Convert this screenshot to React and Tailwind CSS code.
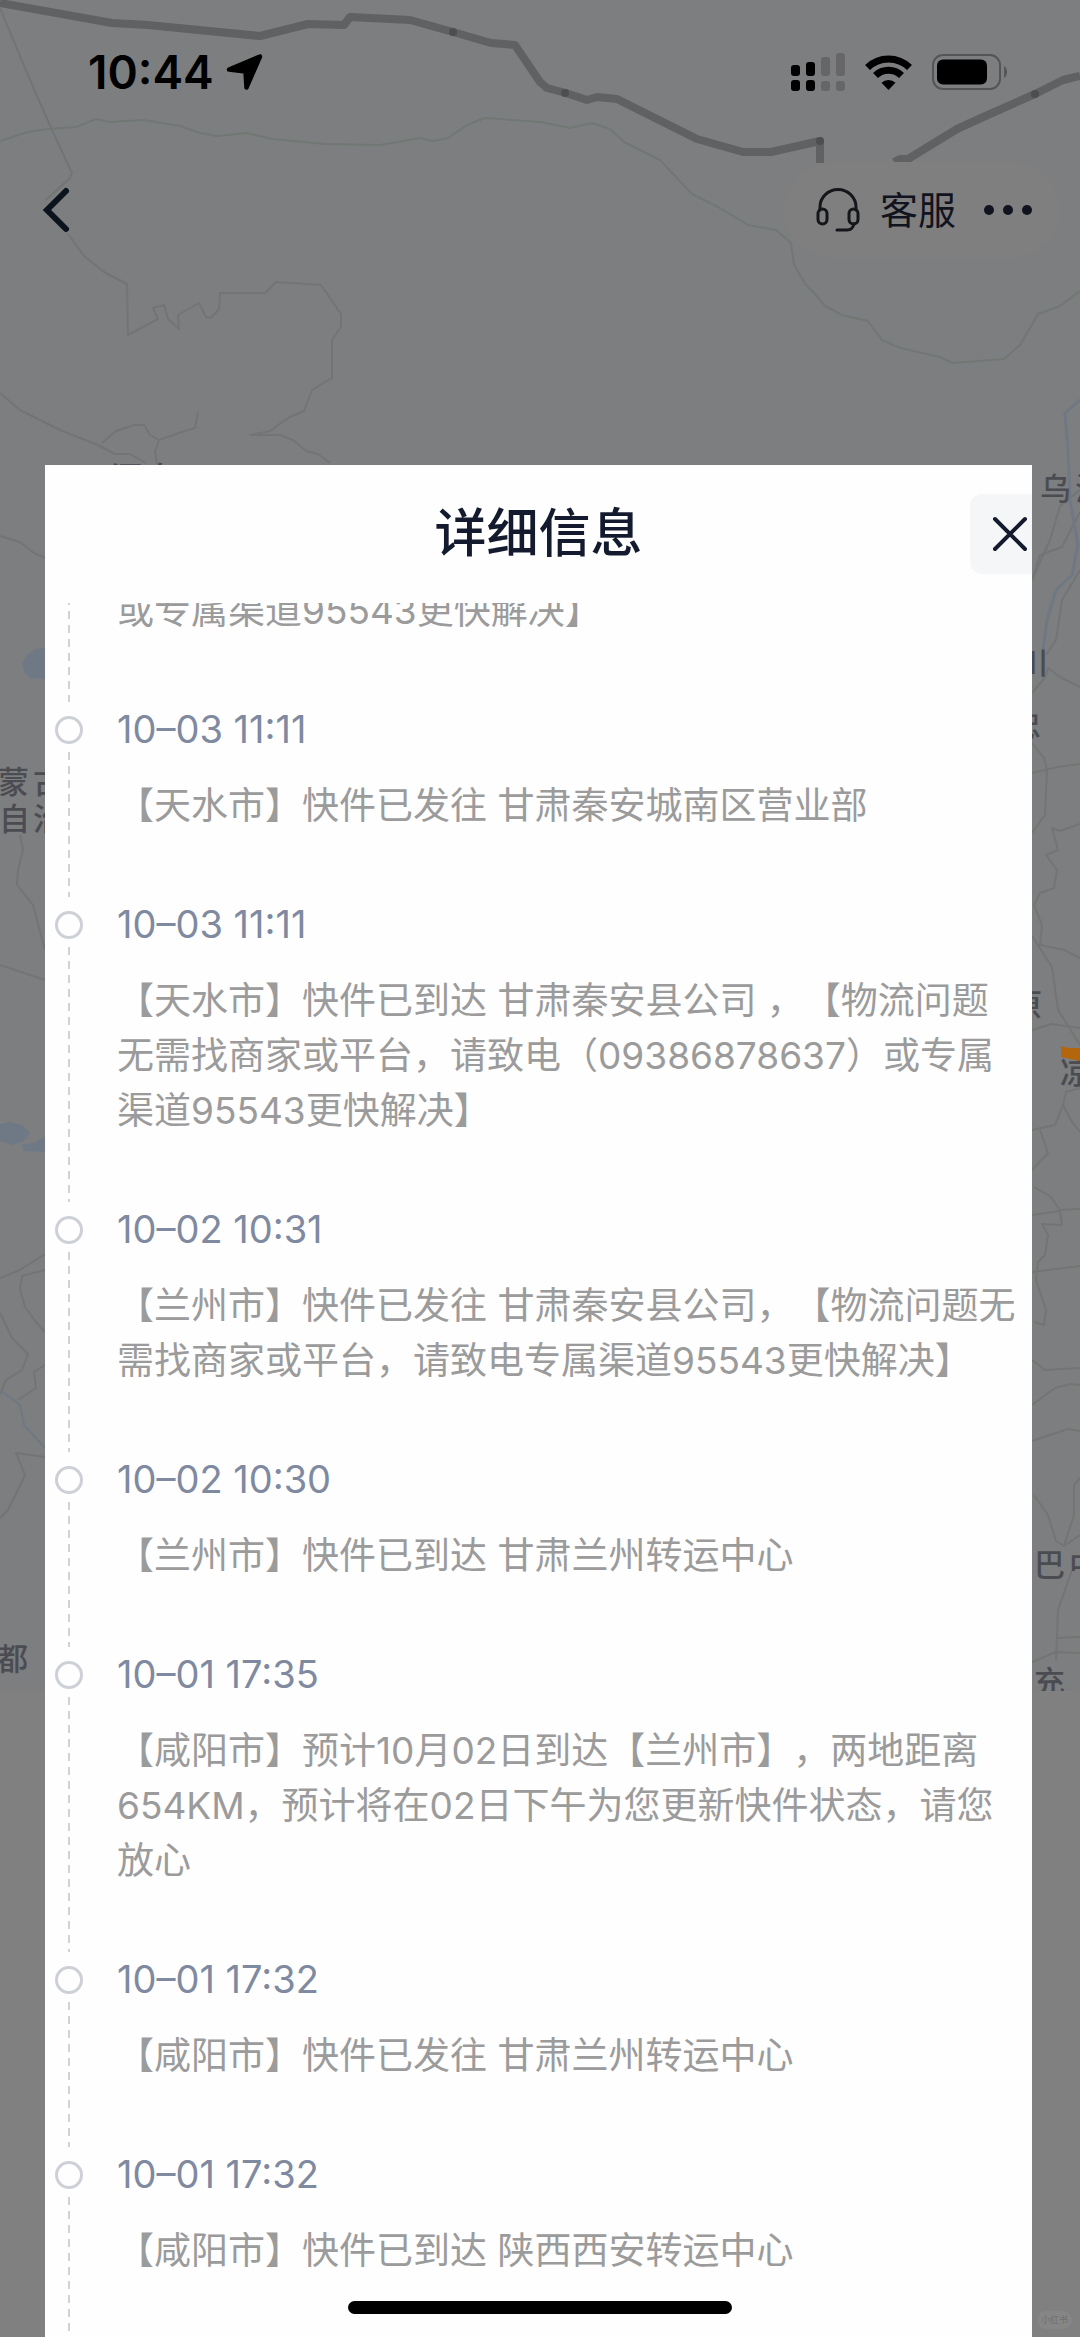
import React from "react";

const events = [
  {
    id: 0,
    text: "或专属渠道95543更快解决】",
  },
  { id: 1, time: "10–03 11:11", text: "【天水市】快件已发往 甘肃秦安城南区营业部" },
  {
    id: 2,
    time: "10–03 11:11",
    text: "【天水市】快件已到达 甘肃秦安县公司 ，【物流问题无需找商家或平台，请致电（09386878637）或专属渠道95543更快解决】",
  },
  {
    id: 3,
    time: "10–02 10:31",
    text: "【兰州市】快件已发往 甘肃秦安县公司，【物流问题无需找商家或平台，请致电专属渠道95543更快解决】",
  },
  { id: 4, time: "10–02 10:30", text: "【兰州市】快件已到达 甘肃兰州转运中心" },
  {
    id: 5,
    time: "10–01 17:35",
    text: "【咸阳市】预计10月02日到达【兰州市】，两地距离654KM，预计将在02日下午为您更新快件状态，请您放心",
  },
  { id: 6, time: "10–01 17:32", text: "【咸阳市】快件已发往 甘肃兰州转运中心" },
  { id: 7, time: "10–01 17:32", text: "【咸阳市】快件已到达 陕西西安转运中心" },
];

function MapBackdrop() {
  return (
    <svg
      className="absolute inset-0 h-full w-full"
      viewBox="0 0 1080 2337"
      preserveAspectRatio="xMidYMin slice"
      aria-hidden="true"
    >
      <rect width="1080" height="1692" fill="#7d7e80" />
      <g fill="#6f7986">
        <path d="M22 664l6-10 8-5 14-2v34l-10-3-9 1-6-6z" />
        <path d="M0 1124l10-2 12 3 8 8-6 8-12 4-12-4zM22 1145l14-3 10-6v16l-22-1z" />
      </g>
      <g fill="none" stroke="#737574" strokeWidth="2" strokeLinejoin="round">
        <path d="M0 8L30 80 52 130 72 173 70 178 46 200M68 234L84 256 104 272 127 284 128 335 158 319 153 308 164 305 168 319 179 329 178 315 199 303 206 317 211 318 219 309 220 293 265 293 276 282 321 285 330 298 341 314 341 327 332 340 332 378 312 390 304 411 288 418 270 431 250 435 280 435 293 440 306 451 318 454 330 463" />
        <path d="M0 393L20 410 60 430 98 445 115 454 130 454 146 463M102 443L116 431 134 425 144 425 150 435 159 440 182 432 195 428 198 412M159 440L155 452 157 464" />
        <path d="M0 536L20 542 34 553 45 558M20 835L23 850 18 870 17 885 33 905 45 950M0 965L45 980" />
        <path d="M0 1278L20 1270 45 1254M45 1270L22 1276 20 1289 25 1307 36 1322 45 1332M0 1313L12 1338 28 1354 22 1370 6 1380 0 1394M45 1365L34 1372 36 1388 18 1400M45 1457L16 1453 25 1475 14 1498 8 1510 0 1518" />
        <path d="M1080 490L1060 506 1050 540 1032 580M1080 512L1062 547 1040 555 1032 580M1080 570L1062 600 1056 640 1046 655M1032 693L1046 676 1048 668 1060 677 1080 687M1032 743L1044 758 1047 770 1045 815 1032 833M1032 773L1058 767 1080 764" />
        <path d="M1080 824L1060 831 1052 828 1058 850 1046 855 1057 870 1054 888 1040 893 1034 905 1042 925 1040 945 1064 950 1080 958M1032 936L1052 967 1058 1010 1080 1045M1032 1030L1052 1024 1080 1028" />
        <path d="M1080 1088L1066 1092 1063 1105 1055 1125 1032 1130M1063 1105L1072 1122 1080 1132M1040 1130L1048 1153 1032 1170M1034 1187L1050 1196 1060 1210 1080 1209M1032 1215L1060 1211 1062 1225 1042 1224 1048 1235 1045 1255 1038 1262 1036 1280 1046 1310 1044 1325 1034 1322M1032 1272L1080 1266" />
        <path d="M1032 1360L1045 1370 1080 1368M1032 1405L1055 1388 1070 1384 1080 1385M1032 1441L1050 1435 1068 1429 1080 1431M1034 1495L1048 1515 1056 1541 1064 1546 1080 1535M1064 1546L1074 1515 1074 1485 1080 1478M1072 1570L1058 1610 1056 1660M1056 1638L1080 1637M1032 1662L1056 1652 1080 1653" />
      </g>
      <g fill="none" stroke="#717772" strokeWidth="2" strokeLinejoin="round">
        <path d="M0 141L28 132 48 129 76 127 96 119 110 122 143 120 180 126 200 133 217 136 247 133 272 139 325 144 380 145 420 138 433 141 448 138 467 125 485 118 540 122 570 128 592 123 610 129 624 142 660 160 692 194 720 208 748 225 776 230 791 243 794 265 806 285 815 294 825 306 842 315 868 321 882 340 900 348 940 357 953 363 1004 359 1020 345 1038 314 1060 306 1080 291" />
      </g>
      <g fill="none" stroke="#6f7883" strokeWidth="3" strokeLinejoin="round">
        <path d="M1080 400L1065 413 1068 450 1070 500 1078 545 1072 575 1056 590 1047 620 1043 650" />
        <path strokeWidth="2" d="M0 1390L20 1405 24 1425 45 1448" />
      </g>
      <g fill="none" stroke="#606163" strokeWidth="8" strokeLinejoin="round">
        <path d="M0 3L112 23 148 25 260 36 308 24 344 25 350 17 410 20 453 32 491 43 515 45 540 82 547 88 566 93 587 100 597 97 617 99 697 139 743 152 771 152 820 141 820 163" />
        <path d="M894 162L900 159 908 159 957 129 981 118 1035 94 1063 80 1080 76" />
      </g>
      <g fill="#4d4e50">
        <circle cx="453" cy="32" r="4" />
        <circle cx="565" cy="93" r="4" />
        <circle cx="820" cy="141" r="4" />
        <circle cx="1035" cy="94" r="4" />
      </g>
      <g
        fill="#4b4c52"
        fontSize="31"
        fontWeight="500"
        fontFamily="'Noto Sans CJK SC', sans-serif"
      >
        <text x="111 145" y="489">酒泉</text>
        <text x="-2 33" y="793">蒙古</text>
        <text x="-1 33" y="830">自治</text>
        <text x="-3" y="1670">都</text>
        <text x="1040 1075" y="500">乌海</text>
        <text x="1017" y="674">川</text>
        <text x="1010" y="737">忠</text>
        <text x="1011" y="1016">原</text>
        <text x="1060" y="1084">凉</text>
        <text x="1034 1069" y="1576">巴中</text>
        <text x="1034" y="1693">充</text>
      </g>
      <path d="M1061 1046l8 2h11v13l-19-4z" fill="#b3660c" />
      <rect y="1691" width="1080" height="646" fill="#808080" />
    </svg>
  );
}

function StatusBar() {
  return (
    <div className="flex h-36 items-center justify-between pr-[72px] pl-[88px] text-black">
      <div className="flex items-center gap-3">
        <time className="text-[46px] leading-none font-semibold">10:44</time>
        <svg className="h-9 w-[38px]" viewBox="0 0 38 36" aria-hidden="true">
          <path
            d="M3 15.500L34 2.500 20.500 33.500 19.500 17.500Z"
            fill="currentColor"
            stroke="currentColor"
            strokeWidth="4.500"
            strokeLinejoin="round"
          />
        </svg>
      </div>
      <div className="flex items-center gap-5">
        <svg className="h-[38px] w-[54px]" viewBox="0 0 54 38" aria-hidden="true">
          <rect x="0" y="12" width="9" height="11" rx="3" />
          <rect x="0" y="27" width="9" height="11" rx="3" />
          <rect x="15" y="9" width="9" height="14" rx="3" />
          <rect x="15" y="27" width="9" height="11" rx="3" />
          <g fill="#666668">
            <rect x="30" y="4" width="9" height="19" rx="3" />
            <rect x="30" y="28" width="9" height="10" rx="3" />
            <rect x="45" y="0" width="9" height="23" rx="3" />
            <rect x="45" y="28" width="9" height="10" rx="3" />
          </g>
        </svg>
        <svg className="h-[35px] w-[47px]" viewBox="0 0 47 35" aria-hidden="true">
          <g fill="none" stroke="currentColor" strokeWidth="7">
            <path d="M2.500 12.500a30 30 0 0 1 42 0" />
            <path d="M10.500 20.500a18.500 18.500 0 0 1 26 0" />
          </g>
          <path d="M23.500 35l-7-7.200a10 10 0 0 1 14 0z" />
        </svg>
        <svg className="h-9 w-[76px]" viewBox="0 0 76 36" aria-hidden="true">
          <rect x="1" y="1" width="67" height="34" rx="10" fill="none" stroke="#555557" strokeWidth="2" />
          <rect x="5" y="5.500" width="50" height="25" rx="6" />
          <path d="M72 12c4 2 4 10 0 12z" fill="#555557" />
        </svg>
      </div>
    </div>
  );
}

function NavBar() {
  return (
    <nav className="flex h-24 items-center justify-between pr-5 pl-10">
      <button type="button" aria-label="返回" className="text-[#0b141c]">
        <svg className="h-12 w-8" viewBox="0 0 32 48" aria-hidden="true">
          <path d="M26 5L7 24l19 19" fill="none" stroke="currentColor" strokeWidth="6" strokeLinecap="round" />
        </svg>
      </button>
      <div className="flex h-full items-center gap-7 rounded-full bg-[#7f7f7f] pr-7 pl-8 text-[#11131f]">
        <button type="button" className="flex items-center gap-5">
          <svg
            className="h-11 w-11"
            viewBox="0 0 44 44"
            fill="none"
            stroke="#15161a"
            strokeWidth="3"
            strokeLinecap="round"
            strokeLinejoin="round"
            aria-hidden="true"
          >
            <path d="M4 22v-3a18 17.500 0 0 1 36 0v3" />
            <rect x="2" y="21" width="9" height="15" rx="4.500" />
            <rect x="33" y="21" width="9" height="15" rx="4.500" />
            <path d="M38 36c-1 4-3 6-7 6H21" />
          </svg>
          <span className="text-[38px] leading-none font-normal">客服</span>
        </button>
        <button type="button" aria-label="更多">
          <svg className="h-3 w-12" viewBox="0 0 48 12" fill="currentColor" aria-hidden="true">
            <circle cx="5" cy="6" r="5" />
            <circle cx="24" cy="6" r="5" />
            <circle cx="43" cy="6" r="5" />
          </svg>
        </button>
      </div>
    </nav>
  );
}

function TimelineItem({ time, text }) {
  return (
    <li className="flex">
      <div className="flex w-12 shrink-0 flex-col items-center gap-2">
        {time && <span className="mt-[14px] h-7 w-7 shrink-0 rounded-full border-3 border-[#cdd0d6]" />}
        <span className="w-0.5 grow bg-[repeating-linear-gradient(to_bottom,#d2d2d4_0_8px,transparent_8px_14px)]" />
      </div>
      <div className="min-w-0 grow pr-[10px] pb-16 pl-6 leading-[55px]">
        {time && <time className="mb-[21px] block text-[38px] text-[#7f8aa0]">{time}</time>}
        <p className="text-[37px] font-normal text-[#9b9b9b] [text-spacing-trim:space-all]">{text}</p>
      </div>
    </li>
  );
}

export default function App() {
  return (
    <div className="relative flex h-screen flex-col overflow-hidden bg-[#808080] font-['Inter','Noto_Sans_CJK_SC',sans-serif]">
      <MapBackdrop />
      <header className="relative flex h-[465px] shrink-0 flex-col gap-[18px]">
        <StatusBar />
        <NavBar />
      </header>

      <section
        role="dialog"
        aria-labelledby="dialog-title"
        className="relative mr-12 ml-[45px] flex min-h-0 grow flex-col overflow-hidden bg-[#fefefe]"
      >
        <div className="grid h-[138px] shrink-0 grid-cols-[1fr_auto_1fr] items-center">
          <h1 id="dialog-title" className="col-start-2 text-[52px] leading-none font-medium text-[#151b2e]">
            详细信息
          </h1>
          <button
            type="button"
            aria-label="关闭"
            className="-mr-[18px] flex size-20 items-center justify-center justify-self-end rounded-xl bg-[#f5f6f8]"
          >
            <svg className="size-9" viewBox="0 0 36 36" aria-hidden="true">
              <path d="M3 3l30 30M33 3L3 33" stroke="#151b2e" strokeWidth="4" strokeLinecap="round" />
            </svg>
          </button>
        </div>
        <div className="min-h-0 grow overflow-hidden">
          <ol className="-mt-5">
            {events.map((event) => (
              <TimelineItem key={event.id} time={event.time} text={event.text} />
            ))}
          </ol>
        </div>
      </section>

      <div className="absolute bottom-[23px] left-1/2 h-[13px] w-96 -translate-x-1/2 rounded-full bg-black" />
      <span className="absolute right-2 bottom-2 rounded-full bg-[#868686] px-1 text-[9px] leading-[18px] text-[#707070]">
        小红书
      </span>
    </div>
  );
}
